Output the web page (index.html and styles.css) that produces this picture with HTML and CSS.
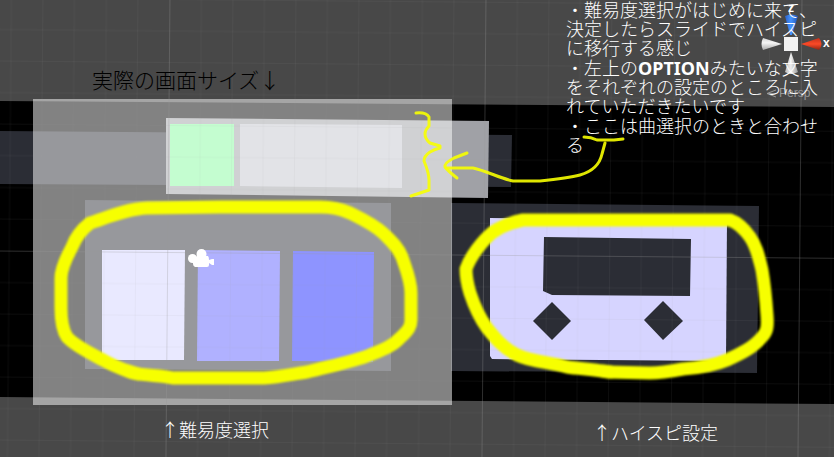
FILE: index.html
```html
<!DOCTYPE html>
<html lang="ja">
<head>
<meta charset="utf-8">
<title>実際の画面サイズ</title>
<link rel="stylesheet" href="styles.css">
</head>
<body>
<main class="scene">
  <svg class="canvas" aria-hidden="true">
    <defs>
      <pattern id="grid" width="316" height="316" patternUnits="userSpaceOnUse" patternTransform="translate(170 -64) rotate(.5)">
        <path class="fine" d="M32 0V316M63.500 0V316M95 0V316M126.500 0V316M158 0V316M189.500 0V316M221 0V316M253 0V316M284.500 0V316M0 32H316M0 63.500H316M0 95H316M0 126.500H316M0 158H316M0 189.500H316M0 221H316M0 253H316M0 284.500H316"/>
        <path class="major" d="M.5 0V316M0 .5H316"/>
      </pattern>
      <linearGradient id="blue"><stop offset="0" stop-color="#2c62c8"/><stop offset=".45" stop-color="#4593ff"/><stop offset="1" stop-color="#2457b4"/></linearGradient>
      <linearGradient id="red" x2="0" y2="1"><stop offset="0" stop-color="#c4321b"/><stop offset=".5" stop-color="#fb4a27"/><stop offset="1" stop-color="#8e2413"/></linearGradient>
      <linearGradient id="pale" x2="0" y2="1"><stop offset="0" stop-color="#d5d5d5"/><stop offset=".4" stop-color="#f4f4f4"/><stop offset="1" stop-color="#aaa"/></linearGradient>
      <linearGradient id="paleUp"><stop offset="0" stop-color="#bbb"/><stop offset=".45" stop-color="#eee"/><stop offset="1" stop-color="#999"/></linearGradient>
    </defs>
    <path fill="#000" d="M0 101L2502 119V418L0 397Z"/>
    <path fill="#2b2d35" d="M0 131L512 135L511 187L0 184Z"/>
    <path fill="#a0a1a6" d="M166 118L489 121L488 198L166 194Z"/>
    <path fill="#c5c7cf" d="M240 124L402 125V188L240 186Z"/>
    <path fill="#2b2d35" d="M85 200L391 203V371L85 369Z"/>
    <path fill="#2b2d35" d="M451 203L759 206L757 373L451 371Z"/>
    <path fill="#fff" fill-opacity=".51" d="M33 99H452V405H33Z"/>
    <path fill="#c4fdd0" d="M170 124H234V186H170Z"/>
    <path fill="#e9e9ff" d="M102 250L185 250L184 360L102 360Z"/>
    <path fill="#b0b1ff" d="M198 250L280 251L279 361L197 361Z"/>
    <path fill="#8e94ff" d="M293 251L374 252L373 362L292 361Z"/>
    <path fill="#d6d4ff" d="M490 218L727 220L726 361L492 359L490 356Z"/>
    <path fill="#2b2d35" d="M544 237L691 239L690 296L552 295L543 291ZM552 302L571 321L552 340L533 321ZM663 301L683 321L663 340L644 320Z"/>
    <rect width="100%" height="100%" fill="url(#grid)"/>
    <g fill="#fff">
      <circle cx="192.500" cy="258.500" r="4.500"/><circle cx="201.500" cy="254" r="5"/>
      <path d="M193 259L197 256H208Q209 257 209 260L212 259H214V265H212L209 263V265Q209 267 207 267H195Q193 266 193 264Z"/>
    </g>
    <g class="marker">
      <path d="M147 208C125 209 106 218 90 223C81 230 75 239 72 247C65 260 61 270 61 278V308C61 323 63 331 67 337C75 346 90 353 103 360C113 366 122 369 133 373C148 376 160 375 173 378H264C282 377 292 374 307 372C330 366 352 362 370 355C382 350 393 346 400 338C409 330 411 326 411 320V293C411 280 406 269 402 257C398 247 391 241 383 233C373 224 362 219 350 213C339 208 331 207 320 207H220L147 208Z"/>
      <path d="M523 220H730C739 223 745 230 750 237C757 247 759 258 762 270C765 288 766 301 767 315C768 327 767 332 762 337C753 348 740 354 727 360C713 366 698 368 683 369C667 372 660 373 650 373L607 372C592 369 580 369 567 367C549 362 532 362 517 355C503 348 495 338 487 328C479 317 474 305 470 293C467 283 466 278 466 269C470 257 482 241 493 232C502 226 512 222 523 220Z"/>
      <path d="M128 371L138 374M603 371L611 372"/>
    </g>
    <g class="pen">
      <path d="M416 113Q426 112 429 117V126Q425 130 425 134Q425 139 430 143L440 146V148Q435 149 430 152Q424 156 424 161Q429 173 429 180V190L411 196"/>
      <path d="M467 153L454 158Q444 163 445 167Q448 171 457 178"/>
      <path d="M447 168H473C487 171 499 178 513 181H540C560 179 569 178 580 175C594 171 600 163 602 154L605 143"/>
      <path d="M584 137Q591 137 597 140H614L623 139"/>
    </g>
    <path fill="#f2f2f2" d="M784 37H798V51H784Z"/>
    <path fill="url(#blue)" d="M785 16Q791 13 798 16L792 35H790Z"/>
    <path fill="url(#red)" d="M801 44L819 38Q824 44 819 50Z"/>
    <path fill="url(#pale)" d="M782 44L763 38Q760 44 763 50Z"/>
    <path fill="url(#paleUp)" d="M791 52L798 72Q791 76 785 72Z"/>
    <path class="persp-icon" d="M776 90L767 93.500H776M767 93.500L776 97"/>
  </svg>
  <span class="axis axis-z">z</span>
  <span class="axis axis-x">x</span>
  <span class="persp">Persp</span>
  <h1 class="title">実際の画面サイズ↓</h1>
  <div class="notes">
    <p>・難易度選択がはじめに来て、<br>決定したらスライドでハイスピ<br>に移行する感じ</p>
    <p>・左上の<b>OPTION</b>みたいな文字<br>をそれぞれの設定のところに入<br>れていただきたいです</p>
    <p>・ここは曲選択のときと合わせ<br>る</p>
  </div>
  <p class="label difficulty">↑難易度選択</p>
  <p class="label speed">↑ハイスピ設定</p>
</main>
</body>
</html>
```
FILE: styles.css
```css
body {
  margin: 0;
  background: #484848;
  color: #fff;
  font-family: "Noto Sans CJK JP", sans-serif;
  font-size: 18px;
  font-weight: 300;
}

.scene {
  position: relative;
  min-height: 100vh;
  overflow: hidden;
}

.canvas {
  position: absolute;
  inset: 0;
  width: 100%;
  height: 100%;
}

.fine,
.major {
  fill: none;
  stroke: #999;
  stroke-opacity: 0.08;
}

.major {
  stroke-opacity: 0.3;
}

.marker,
.pen {
  fill: none;
  stroke: #f7ff00;
  stroke-linecap: round;
  stroke-linejoin: round;
}

.marker {
  stroke-width: 13px;
  filter: blur(1px);
}

.pen {
  stroke-width: 3px;
  stroke-opacity: 0.9;
}

.persp-icon {
  fill: none;
  stroke: #999;
}

.title,
.label,
.notes,
.axis,
.persp {
  position: absolute;
  margin: 0;
  white-space: nowrap;
}

.title {
  left: 92px;
  top: 67px;
  color: #000;
  font-size: 21px;
  font-weight: 300;
  line-height: 24px;
}

.notes {
  left: 566px;
  top: 0;
  display: grid;
  gap: 1px;
  line-height: 19px;
}

.notes p {
  margin: 0;
}

.notes b {
  font-family: "Noto Sans", sans-serif;
  font-weight: 700;
  line-height: 1;
}

.label {
  line-height: 20px;
}

.difficulty {
  left: 161px;
  top: 419px;
}

.speed {
  left: 593px;
  top: 422px;
}

.axis {
  font-family: "Liberation Sans", sans-serif;
  font-size: 12px;
  font-weight: 700;
  line-height: 12px;
}

.axis-z {
  left: 788px;
  top: 2px;
}

.axis-x {
  left: 823px;
  top: 37px;
}

.persp {
  left: 779px;
  top: 86px;
  color: #999;
  font-family: "Liberation Sans", sans-serif;
  font-size: 12px;
  font-weight: 400;
  line-height: 14px;
}
```
